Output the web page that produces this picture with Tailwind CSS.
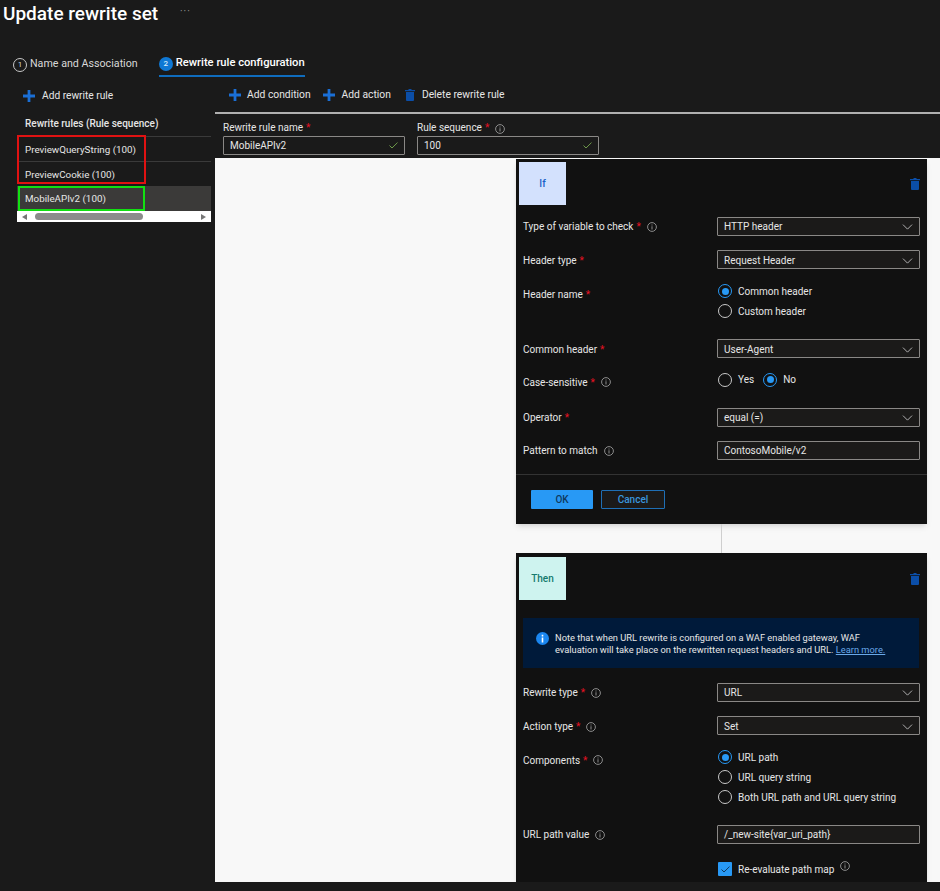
<!DOCTYPE html>
<html lang="en">
<head>
    <title>Update rewrite set</title>
    <meta name="viewport" content="width=device-width, initial-scale=1">
    <script src="https://cdn.jsdelivr.net/npm/@tailwindcss/browser@4"></script>
</head>
<body class="bg-[#1a1a1a] text-[#e6e6e6] text-[10px] font-['Roboto',sans-serif] w-[940px] h-[891px] overflow-hidden">
    <!-- shared icons -->
    <svg class="hidden">
        <symbol id="plus" viewBox="0 0 13 13"><path d="M5 0h3v5h5v3H8v5H5V8H0V5h5z" fill="currentColor"/></symbol>
        <symbol id="trash" viewBox="0 0 10 12"><path d="M3.5 0h3v1H10v1.2H0V1h3.5zM1 3h8v8a1 1 0 0 1-1 1H2a1 1 0 0 1-1-1z" fill="currentColor"/></symbol>
        <symbol id="info" viewBox="0 0 10 10"><circle cx="5" cy="5" r="4.4" fill="none" stroke="currentColor" stroke-width=".8"/><path d="M4.6 4.2h.8v3.2h-.8zM4.6 2.6h.8v.9h-.8z" fill="currentColor"/></symbol>
        <symbol id="chev" viewBox="0 0 12 7"><path d="M.7.7 6 6l5.3-5.3" fill="none" stroke="currentColor" stroke-width="1"/></symbol>
    </svg>

    <!-- Title -->
    <div class="h-[28px] pl-[3px] pb-[2px] flex items-center">
        <h1 class="w-[156px] text-[19px] font-medium text-white leading-none whitespace-nowrap">Update rewrite set</h1>
        <span class="ml-[21px] mb-[3px] text-[#9a9a9a] text-[10px] tracking-[1px]">···</span>
    </div>

    <!-- Tabs -->
    <div class="mt-[22px] pl-[13px] flex gap-[21px] h-[27px]">
        <div class="flex items-center gap-[3px] text-[#d8d8d8] text-[10.7px] pt-[2px]">
            <span class="w-[14px] h-[14px] rounded-full border border-[#c8c8c8] flex items-center justify-center text-[8px]">1</span>
            Name and Association
        </div>
        <div class="flex items-center gap-[3px] border-b-2 border-[#0f6cbd] font-medium text-white text-[11.2px] pt-[2px]">
            <span class="w-[14px] h-[14px] rounded-full bg-[#0f78d4] text-[#d8ebfa] flex items-center justify-center text-[8px]">2</span>
            Rewrite rule configuration
        </div>
    </div>

    <div class="flex">
        <!-- Left rule list -->
        <div class="w-[215px] pl-[17px] shrink-0">
            <div class="relative w-[194px]">
                <div class="h-[36px] pl-[6px] pt-[2px] flex items-center gap-[7px] text-[10.2px]">
                    <svg class="w-[12px] h-[12px] text-[#1a6fd6]"><use href="#plus"/></svg>
                    <span>Add rewrite rule</span>
                </div>
                <div class="h-[23px] pl-[8px] pb-[2px] flex items-center font-medium">Rewrite rules (Rule sequence)</div>
                <div class="h-[25px] pl-[8px] pt-[2px] flex items-center border-t border-[#3a3a3a] text-[9.8px]">PreviewQueryString (100)</div>
                <div class="h-[25px] pl-[8px] pt-[2px] flex items-center border-t border-[#3a3a3a] text-[9.8px]">PreviewCookie (100)</div>
                <div class="h-[25px] pl-[8px] pt-[2px] flex items-center bg-[#3b3a39] text-[9.8px]">MobileAPIv2 (100)</div>
                <div class="h-[11px] bg-white flex items-center px-[5px]">
                    <span class="border-y-[3.5px] border-r-[5px] border-y-transparent border-r-[#777]"></span>
                    <span class="ml-[8px] w-[108px] h-[7px] rounded-full bg-[#8c8c8c]"></span>
                    <span class="ml-auto border-y-[3.5px] border-l-[5px] border-y-transparent border-l-[#777]"></span>
                </div>
                <div class="absolute left-0 top-[58px] w-[129px] h-[49px] border-2 border-[#e01212]"></div>
                <div class="absolute left-[1px] top-[109px] w-[127px] h-[25px] border-2 border-[#12e012]"></div>
            </div>
        </div>

        <!-- Main -->
        <div class="w-[725px]">
            <div class="h-[37px] pl-[14px] flex items-center border-b-2 border-[#b0b0b0] text-[10.3px]">
                <svg class="w-[12px] h-[12px] text-[#1a6fd6]"><use href="#plus"/></svg>
                <span class="ml-[6px]">Add condition</span>
                <svg class="ml-[12px] w-[12px] h-[12px] text-[#1a6fd6]"><use href="#plus"/></svg>
                <span class="ml-[7px]">Add action</span>
                <svg class="ml-[14px] w-[10px] h-[12px] text-[#0b4ea8]"><use href="#trash"/></svg>
                <span class="ml-[7px]">Delete rewrite rule</span>
            </div>

            <div class="h-[44px] pl-[8px] flex gap-[12px]">
                <div class="w-[182px]">
                    <div class="h-[22px] pb-[1px] flex items-end">Rewrite rule name<span class="ml-[3px] text-[#e81123]">*</span></div>
                    <div class="h-[19px] border border-[#8a8886] rounded-[1px] px-[6px] flex items-center justify-between">
                        MobileAPIv2
                        <svg class="w-[9px] h-[7px] text-[#6e9a4a]" viewBox="0 0 9 7"><path d="M.5 3.5 3 6 8.5.6" fill="none" stroke="currentColor"/></svg>
                    </div>
                </div>
                <div class="w-[182px]">
                    <div class="h-[22px] pb-[1px] flex items-end">Rule sequence<span class="ml-[3px] text-[#e81123]">*</span>
                        <svg class="ml-[6px] mb-[1px] w-[10px] h-[10px] text-[#aaa]"><use href="#info"/></svg>
                    </div>
                    <div class="h-[19px] border border-[#8a8886] rounded-[1px] px-[6px] flex items-center justify-between">
                        100
                        <svg class="w-[9px] h-[7px] text-[#6e9a4a]" viewBox="0 0 9 7"><path d="M.5 3.5 3 6 8.5.6" fill="none" stroke="currentColor"/></svg>
                    </div>
                </div>
            </div>

            <!-- Canvas -->
            <div class="h-[724px] bg-[#f8f8f8] pt-px pl-[301px] overflow-hidden">
                <!-- If card -->
                <div class="w-[411px] h-[365px] bg-[#111111] pt-[3px] shadow-md">
                    <div class="flex justify-between items-center pl-[3px] pr-[7px]">
                        <div class="w-[47px] h-[43px] bg-[#d3e1fd] text-[#1a62c9] font-medium flex items-center justify-center">If</div>
                        <svg class="w-[10px] h-[12px] text-[#0b4ea8]"><use href="#trash"/></svg>
                    </div>

                    <div class="mt-[12px] pl-[7px] flex h-[19px]">
                        <div class="w-[194px] flex items-center">Type of variable to check<span class="ml-[3px] text-[#e81123]">*</span><svg class="ml-[6px] w-[10px] h-[10px] text-[#aaa]"><use href="#info"/></svg></div>
                        <div class="w-[203px] border border-[#8a8886] rounded-[1px] bg-[#1b1a19] px-[6px] flex items-center justify-between">HTTP header<svg class="w-[11px] h-[6px] text-[#c8c8c8]"><use href="#chev"/></svg></div>
                    </div>
                    <div class="mt-[14px] pl-[7px] flex h-[19px]">
                        <div class="w-[194px] pt-[2px] flex items-center">Header type<span class="ml-[3px] text-[#e81123]">*</span></div>
                        <div class="w-[203px] pt-[2px] border border-[#8a8886] rounded-[1px] bg-[#1b1a19] px-[6px] flex items-center justify-between">Request Header<svg class="w-[11px] h-[6px] text-[#c8c8c8]"><use href="#chev"/></svg></div>
                    </div>
                    <div class="mt-[15px] pl-[7px] flex">
                        <div class="w-[194px] h-[20px] flex items-center">Header name<span class="ml-[3px] text-[#e81123]">*</span></div>
                        <div class="flex flex-col gap-[6px]">
                            <div class="h-[14px] flex items-center gap-[6px]"><span class="w-[14px] h-[14px] rounded-full border border-[#2899f5] flex items-center justify-center ml-px"><span class="w-[7px] h-[7px] rounded-full bg-[#2899f5]"></span></span><span>Common header</span></div>
                            <div class="h-[14px] flex items-center gap-[6px]"><span class="w-[14px] h-[14px] rounded-full border border-[#c8c8c8] ml-px"></span><span>Custom header</span></div>
                        </div>
                    </div>
                    <div class="mt-[21px] pl-[7px] flex h-[19px]">
                        <div class="w-[194px] pt-[2px] flex items-center">Common header<span class="ml-[3px] text-[#e81123]">*</span></div>
                        <div class="w-[203px] pt-[2px] border border-[#8a8886] rounded-[1px] bg-[#1b1a19] px-[6px] flex items-center justify-between">User-Agent<svg class="w-[11px] h-[6px] text-[#c8c8c8]"><use href="#chev"/></svg></div>
                    </div>
                    <div class="mt-[14px] pl-[7px] flex h-[15px]">
                        <div class="w-[194px] h-[20px] flex items-center">Case-sensitive<span class="ml-[3px] text-[#e81123]">*</span><svg class="ml-[6px] w-[10px] h-[10px] text-[#aaa]"><use href="#info"/></svg></div>
                        <div class="flex items-center">
                            <span class="w-[14px] h-[14px] rounded-full border border-[#c8c8c8] ml-px"></span><span class="ml-[6px]">Yes</span>
                            <span class="ml-[9px] w-[14px] h-[14px] rounded-full border border-[#2899f5] flex items-center justify-center"><span class="w-[7px] h-[7px] rounded-full bg-[#2899f5]"></span></span><span class="ml-[6px]">No</span>
                        </div>
                    </div>
                    <div class="mt-[21px] pl-[7px] flex h-[19px]">
                        <div class="w-[194px] flex items-center">Operator<span class="ml-[3px] text-[#e81123]">*</span></div>
                        <div class="w-[203px] border border-[#8a8886] rounded-[1px] bg-[#1b1a19] px-[6px] flex items-center justify-between">equal (=)<svg class="w-[11px] h-[6px] text-[#c8c8c8]"><use href="#chev"/></svg></div>
                    </div>
                    <div class="mt-[14px] pl-[7px] flex h-[19px]">
                        <div class="w-[194px] flex items-center">Pattern to match<svg class="ml-[6px] w-[10px] h-[10px] text-[#aaa]"><use href="#info"/></svg></div>
                        <div class="w-[203px] border border-[#8a8886] rounded-[1px] bg-[#1b1a19] px-[6px] flex items-center">ContosoMobile/v2</div>
                    </div>
                    <div class="mt-[14px] border-t border-[#333333]"></div>
                    <div class="mt-[15px] pl-[15px] flex gap-[8px]">
                        <div class="w-[62px] h-[19px] rounded-[1px] bg-[#2899f5] text-[#0f3a5f] font-medium flex items-center justify-center">OK</div>
                        <div class="w-[64px] h-[19px] rounded-[1px] border border-[#1f6fb5] text-[#3a96dd] font-medium bg-[#1b1a19] flex items-center justify-center">Cancel</div>
                    </div>
                </div>

                <div class="ml-[205px] w-px h-[29px] bg-[#cfcfcf]"></div>

                <!-- Then card -->
                <div class="w-[411px] h-[340px] bg-[#111111] pt-[4px] shadow-md">
                    <div class="flex justify-between items-center pl-[3px] pr-[7px]">
                        <div class="w-[47px] h-[43px] bg-[#cef3ef] text-[#157a6e] font-medium flex items-center justify-center">Then</div>
                        <svg class="w-[10px] h-[12px] text-[#0b4ea8]"><use href="#trash"/></svg>
                    </div>

                    <div class="mt-[18px] ml-[7px] w-[396px] h-[50px] bg-[#001a3a] pl-[13px] flex items-center gap-[6px]">
                        <svg class="w-[13px] h-[13px] shrink-0 mb-[10px]" viewBox="0 0 13 13"><circle cx="6.5" cy="6.5" r="6.5" fill="#1a86f0"/><path d="M5.7 5.4h1.6v5H5.7zM5.7 2.8h1.6v1.6H5.7z" fill="#fff"/></svg>
                        <p class="w-[335px] leading-[12px] text-[9.3px] pt-[2px]">Note that when URL rewrite is configured on a WAF enabled gateway, WAF evaluation will take place on the rewritten request headers and URL. <span class="text-[#69a8e8] underline">Learn more.</span></p>
                    </div>

                    <div class="mt-[15px] pl-[7px] flex h-[19px]">
                        <div class="w-[194px] flex items-center">Rewrite type<span class="ml-[3px] text-[#e81123]">*</span><svg class="ml-[6px] w-[10px] h-[10px] text-[#aaa]"><use href="#info"/></svg></div>
                        <div class="w-[203px] border border-[#8a8886] rounded-[1px] bg-[#1b1a19] px-[6px] flex items-center justify-between">URL<svg class="w-[11px] h-[6px] text-[#c8c8c8]"><use href="#chev"/></svg></div>
                    </div>
                    <div class="mt-[14px] pl-[7px] flex h-[19px]">
                        <div class="w-[194px] pt-[2px] flex items-center">Action type<span class="ml-[3px] text-[#e81123]">*</span><svg class="ml-[6px] w-[10px] h-[10px] text-[#aaa]"><use href="#info"/></svg></div>
                        <div class="w-[203px] pt-[2px] border border-[#8a8886] rounded-[1px] bg-[#1b1a19] px-[6px] flex items-center justify-between">Set<svg class="w-[11px] h-[6px] text-[#c8c8c8]"><use href="#chev"/></svg></div>
                    </div>
                    <div class="mt-[15px] pl-[7px] flex">
                        <div class="w-[194px] h-[20px] flex items-center">Components<span class="ml-[3px] text-[#e81123]">*</span><svg class="ml-[6px] w-[10px] h-[10px] text-[#aaa]"><use href="#info"/></svg></div>
                        <div class="flex flex-col gap-[6px]">
                            <div class="h-[14px] flex items-center gap-[6px]"><span class="w-[14px] h-[14px] rounded-full border border-[#2899f5] flex items-center justify-center ml-px"><span class="w-[7px] h-[7px] rounded-full bg-[#2899f5]"></span></span><span>URL path</span></div>
                            <div class="h-[14px] flex items-center gap-[6px]"><span class="w-[14px] h-[14px] rounded-full border border-[#c8c8c8] ml-px"></span><span>URL query string</span></div>
                            <div class="h-[14px] flex items-center gap-[6px]"><span class="w-[14px] h-[14px] rounded-full border border-[#c8c8c8] ml-px"></span><span>Both URL path and URL query string</span></div>
                        </div>
                    </div>
                    <div class="mt-[21px] pl-[7px] flex h-[19px]">
                        <div class="w-[194px] flex items-center">URL path value<svg class="ml-[6px] w-[10px] h-[10px] text-[#aaa]"><use href="#info"/></svg></div>
                        <div class="w-[203px] border border-[#8a8886] rounded-[1px] bg-[#1b1a19] px-[6px] flex items-center">/_new-site{var_uri_path}</div>
                    </div>
                    <div class="mt-[18px] pl-[202px] flex h-[14px] items-center gap-[6px]">
                        <span class="w-[14px] h-[14px] rounded-[1px] bg-[#2899f5] flex items-center justify-center"><svg class="w-[9px] h-[7px] text-[#0f3a5f]" viewBox="0 0 9 7"><path d="M.5 3.5 3 6 8.5.6" fill="none" stroke="currentColor"/></svg></span>
                        Re-evaluate path map
                        <svg class="mb-[6px] w-[10px] h-[10px] text-[#aaa]"><use href="#info"/></svg>
                    </div>
                </div>
            </div>
        </div>
    </div>
</body>
</html>
